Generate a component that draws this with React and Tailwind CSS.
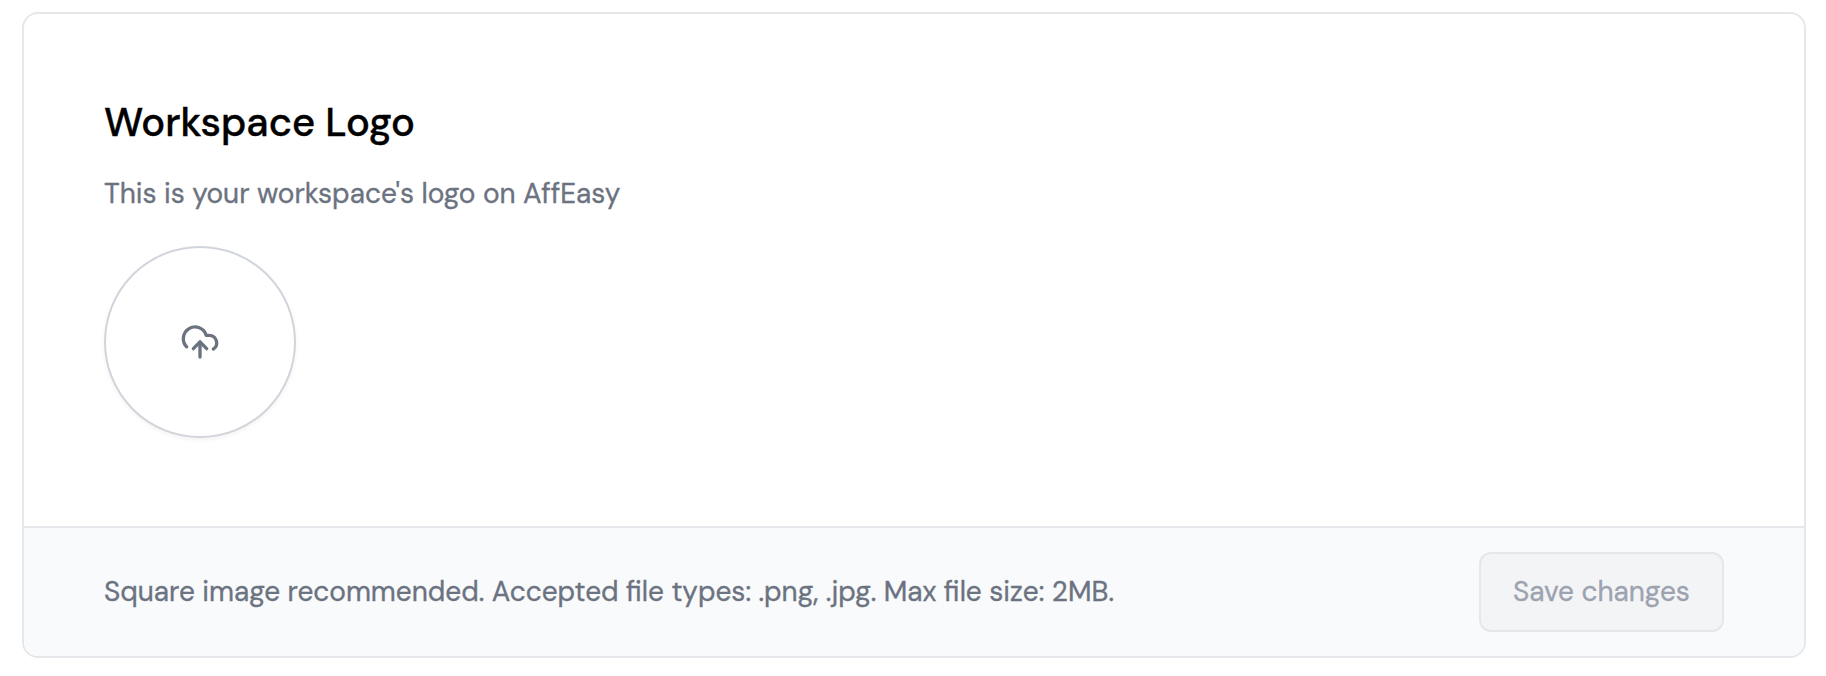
function UploadCloudIcon() {
  return (
    <svg
      className="size-10"
      viewBox="0 0 24 24"
      fill="none"
      stroke="currentColor"
      strokeWidth="2"
      strokeLinecap="round"
      strokeLinejoin="round"
      aria-hidden="true"
    >
      <path d="M4 14.899A7 7 0 1 1 15.71 8h1.79a4.5 4.5 0 0 1 2.5 8.242" />
      <path d="M12 12v9" />
      <path d="m16 16-4-4-4 4" />
    </svg>
  );
}

export default function App() {
  return (
    <main className="h-[676px] bg-white pt-3 pr-5 pl-[22px] font-['DM_Sans','Lato',sans-serif] text-[28px] leading-10 text-[#6b7280] [-webkit-text-stroke:0.35px_currentColor]">
      <form className="flex h-[646px] flex-col overflow-hidden rounded-2xl border-2 border-[#e5e7eb] bg-white">
        <div className="flex flex-1 flex-col items-start px-20 pt-20">
          <h2 className="text-[40px] leading-[56px] font-medium text-black">Workspace Logo</h2>
          <p className="mt-6">This is your workspace's logo on AffEasy</p>
          <label className="mt-8 flex size-48 items-center justify-center rounded-full border-2 border-[#d1d5db] bg-white shadow-[0_2px_4px_0_rgb(0_0_0/0.05)]">
            <UploadCloudIcon />
          </label>
        </div>
        <div className="flex h-[130px] items-center justify-between border-t-2 border-[#e5e7eb] bg-[#f9fafc] px-20">
          <p>Square image recommended. Accepted file types: .png, .jpg. Max file size: 2MB.</p>
          <button
            type="button"
            disabled
            className="flex h-20 w-[245px] items-center justify-center rounded-xl border-2 border-[#e5e7eb] bg-[#f3f4f6] text-[#9ca3af] [-webkit-text-stroke:0.35px_#9ca3af]"
          >
            Save changes
          </button>
        </div>
      </form>
    </main>
  );
}
